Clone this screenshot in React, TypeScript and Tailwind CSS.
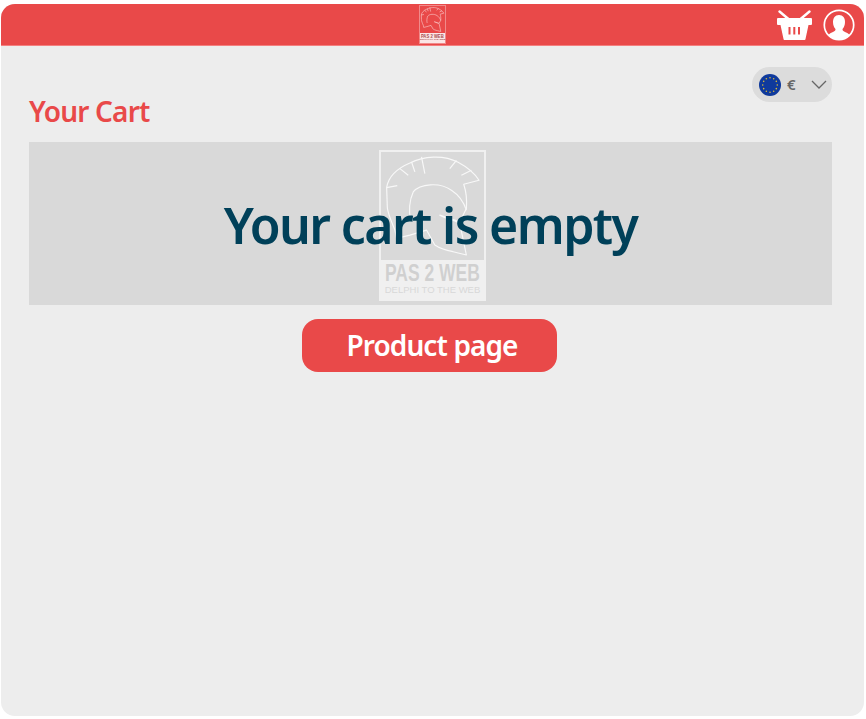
function Helmet({ stroke, width }: { stroke: string; width: number }) {
  return (
    <svg viewBox="64 35 308 325" className="block w-full h-full" fill="none" stroke={stroke} strokeWidth={width} strokeLinejoin="round">
      <path d="M80 142 C85 110 110 85 150 68 C190 48 250 42 295 66 C325 82 345 100 358 120 L312 132 C318 150 322 178 320 205 L300 245 L240 225 C262 238 290 240 300 250 L320 345 L280 335 C255 330 235 322 225 315 L200 270 L150 285 L110 295 L105 270 C92 240 82 215 82 200 Z" />
      <path d="M120 85 L145 105 M155 65 L165 95 M185 50 L195 100 M290 60 L270 85 M335 90 L305 105 M80 142 L112 136" />
      <path d="M152 240 C146 215 148 180 160 155 C180 130 240 125 275 150 C298 165 312 185 320 210" />
    </svg>
  );
}

function Logo({ big }: { big: boolean }) {
  if (big) {
    return (
      <div className="absolute left-[379px] top-[150px] w-[107px] h-[151px] bg-[#f0f0f0] p-[2px] flex flex-col">
        <div className="bg-[#d9d9d9] h-[108px] shrink-0">
          <Helmet stroke="#f8f8f8" width={3.500} />
        </div>
        <div className="flex flex-col items-center text-center font-['Liberation_Sans',sans-serif] leading-none">
          <div className="text-[23px] font-bold mt-[2px] h-[23px] text-[#d0d0d0] whitespace-nowrap scale-x-[0.76]">PAS 2 WEB</div>
          <div className="text-[9.500px] h-[10px] text-[#d8d8d8] whitespace-nowrap">DELPHI TO THE WEB</div>
        </div>
      </div>
    );
  }
  return (
    <div className="w-[27px] h-[39px] mt-[1px] bg-[#f08a8a] p-px flex flex-col">
      <div className="h-[27px] bg-[#e94949] shrink-0">
        <Helmet stroke="#f9c4c4" width={8} />
      </div>
      <div className="flex-1 flex flex-col items-center bg-[#fbe6e6] text-[#a85050] font-['Liberation_Sans',sans-serif] font-bold leading-none">
        <div className="text-[6px] h-[6px] whitespace-nowrap scale-x-[0.7]">PAS 2 WEB</div>
        <div className="text-[2.500px] h-[3px] whitespace-nowrap">DELPHI TO THE WEB</div>
      </div>
    </div>
  );
}

function Basket() {
  return (
    <svg width="35" height="30" viewBox="0 0 35 30" fill="#fff" className="block">
      <path d="M2.500 1.500 L15 12 M32.500 1.500 L20 12" stroke="#fff" strokeWidth="2.400" strokeLinecap="round" />
      <path fillRule="evenodd" d="M0 9 a1 1 0 0 1 1-1 H34 a1 1 0 0 1 1 1 V14 a1 1 0 0 1-1 1 H31.500 L28.500 29 a1 1 0 0 1-1 1 H7.500 a1 1 0 0 1-1-1 L3.500 15 H1 a1 1 0 0 1-1-1 Z M11.500 17 V24.500 H13.500 V17 Z M16.300 17 V24.500 H18.300 V17 Z M21 17 V24.500 H23 V17 Z" />
    </svg>
  );
}

function User() {
  return (
    <svg width="32" height="32" viewBox="0 0 32 32" className="block">
      <circle cx="16" cy="16" r="14.700" fill="none" stroke="#fff" strokeWidth="1.700" />
      <path fill="#fff" d="M16 6 C20 6 22 9 22 13 C22 16 21 18.500 19.500 20 C19.500 21.500 20 22 22 23 C24.500 24 26 24.800 26.800 26.500 C24 29.300 20 30.500 16 30.500 C12 30.500 8 29.300 5.200 26.500 C6 24.800 7.500 24 10 23 C12 22 12.500 21.500 12.500 20 C11 18.500 10 16 10 13 C10 9 12 6 16 6 Z" />
    </svg>
  );
}

function EuFlag() {
  const stars = Array.from({ length: 12 }, (_, i) => {
    const a = (i * Math.PI) / 6;
    return <circle key={i} cx={11 + 7.300 * Math.cos(a)} cy={11 + 7.300 * Math.sin(a)} r={0.800} fill="#d8b93a" />;
  });
  return (
    <svg width="22" height="22" viewBox="0 0 22 22" className="block">
      <circle cx="11" cy="11" r="11" fill="#0f3a9c" />
      {stars}
    </svg>
  );
}

export default function App() {
  return (
    <div className="relative w-[866px] h-[719px] bg-white pt-[4px] pl-[1px] font-['Noto_Sans',sans-serif]">
      <div className="relative w-[863px] h-[712px] bg-[#ededed] rounded-[14px] overflow-hidden flex flex-col">
        <header className="h-[42px] bg-[#e94949] border-b border-[#f47f7f] flex justify-center shrink-0">
          <Logo big={false} />
        </header>
        <div className="flex justify-end mt-[21px] pr-[32px]">
          <div className="w-[80px] h-[35px] rounded-full bg-[#dcdcdc] flex items-center pl-[7px]">
            <EuFlag />
            <span className="ml-[6px] text-[15px] font-semibold text-[#666]">€</span>
            <svg width="16" height="9" viewBox="0 0 16 9" fill="none" stroke="#666" strokeWidth="1.300" className="ml-[15px]">
              <path d="M1 1 L8 8 L15 1" />
            </svg>
          </div>
        </div>
        <h1 className="mx-[28px] text-[28px] leading-[36px] font-semibold text-[#e94949] -mt-[9px] mb-[-1px] tracking-[-0.800px]">Your Cart</h1>
        <div className="mx-[28px] mt-[14px] w-[803px] h-[163px] bg-[#d9d9d9] flex items-center justify-center">
          <span className="relative z-10 text-[#004059] text-[50px] font-semibold leading-none tracking-[-1.600px] mt-[3px]">Your cart is empty</span>
        </div>
        <div className="flex justify-center mt-[14px] pr-[6px]">
          <button className="w-[255px] h-[53px] rounded-[16px] pl-[5px] pb-[2px] bg-[#e94949] text-white text-[28px] font-semibold tracking-[-0.900px]">Product page</button>
        </div>
        <div className="absolute right-[9px] top-[5px] flex items-center gap-[11px]">
          <Basket />
          <User />
        </div>
      </div>
      <Logo big={true} />
    </div>
  );
}
